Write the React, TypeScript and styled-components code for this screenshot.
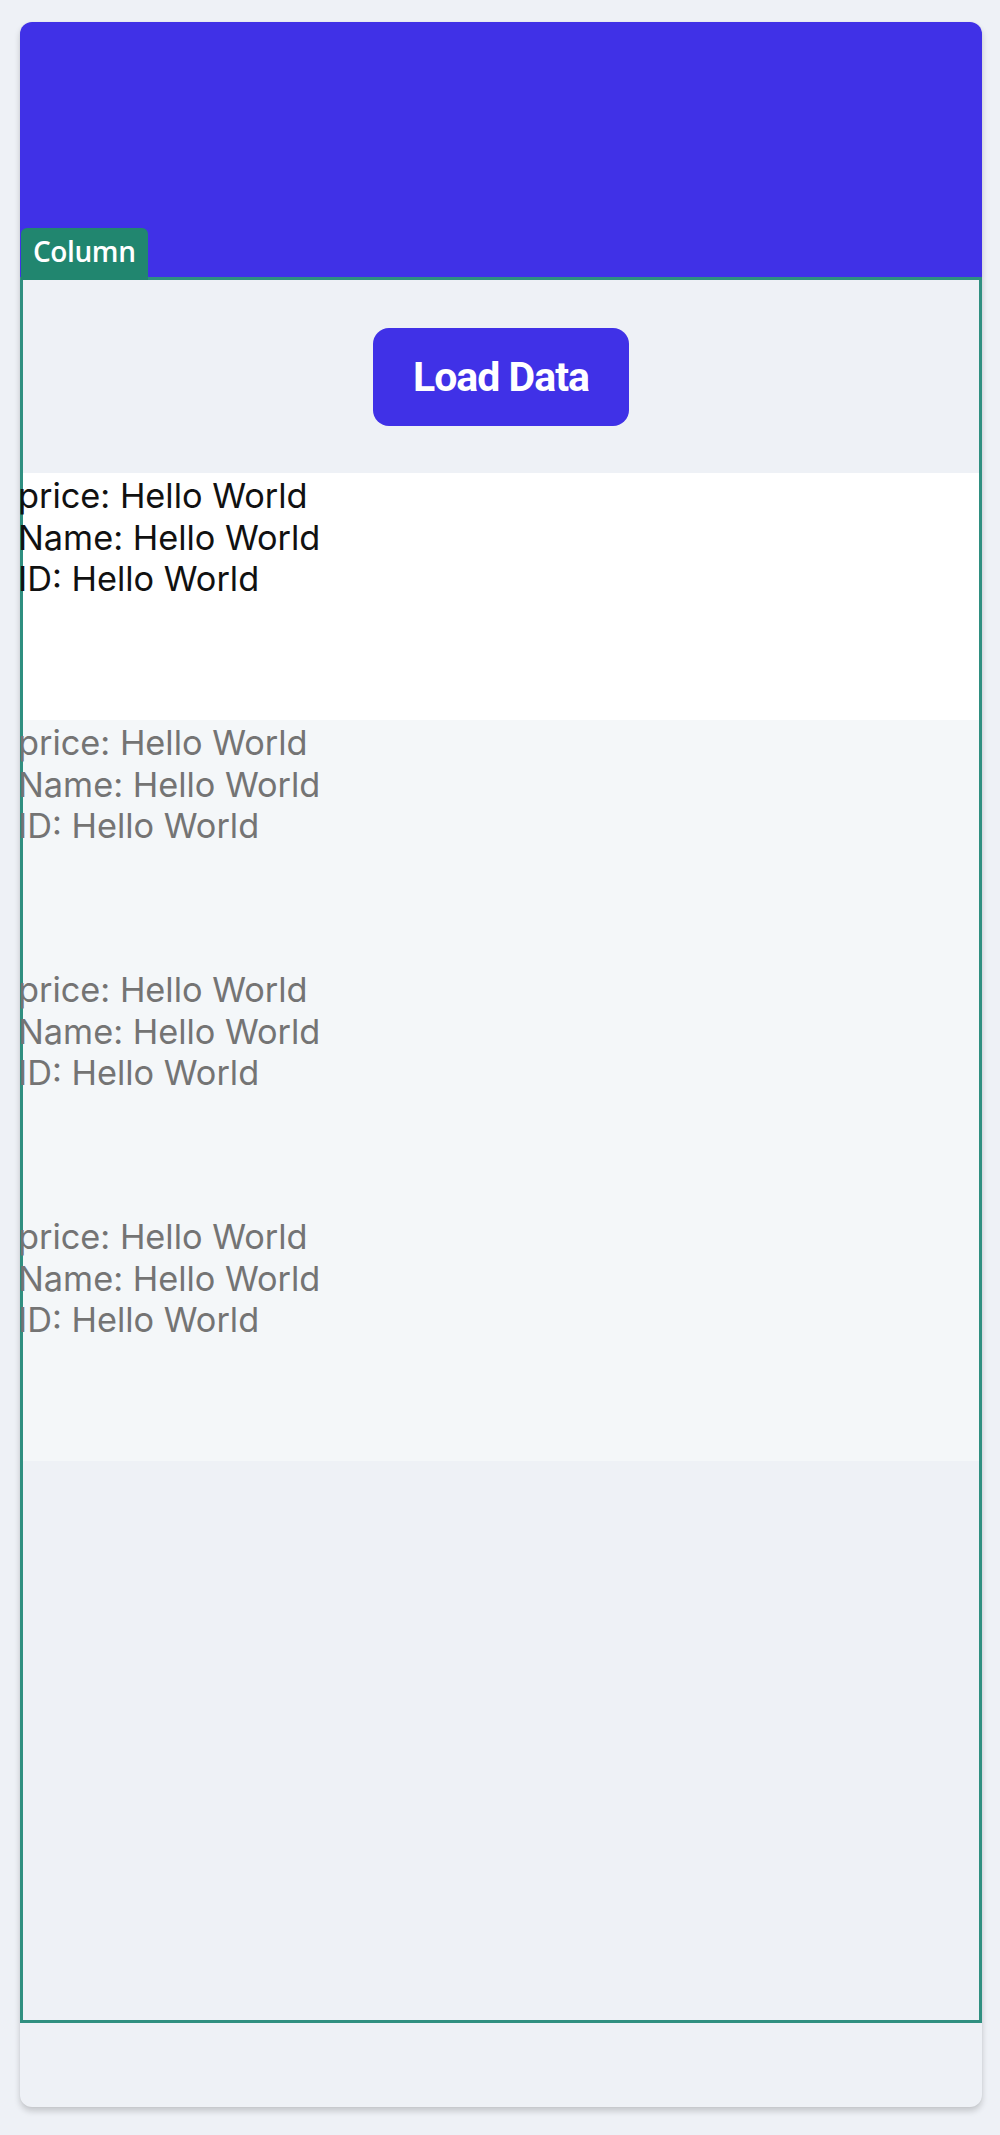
import React from "react";
import styled, { createGlobalStyle } from "styled-components";

const GlobalStyle = createGlobalStyle`
  html, body {
    margin: 0;
    padding: 0;
    background: #eef1f6;
  }
  body {
    font-family: "Inter", "Liberation Sans", sans-serif;
  }
`;

const Page = styled.div`
  padding: 22px 18px 28px 20px;
`;

const Card = styled.div`
  height: 2085px;
  display: flex;
  flex-direction: column;
  background: #eef1f6;
  border-radius: 12px;
  overflow: hidden;
  box-shadow: 0 4px 6px rgba(0, 0, 0, 0.18), 0 0 2px rgba(0, 0, 0, 0.06);
`;

const Header = styled.div`
  height: 255px;
  flex: none;
  background: #4031e7;
`;

const ColumnBox = styled.div`
  position: relative;
  height: 1746px;
  flex: none;
  box-sizing: border-box;
  border: 3px solid #2f8f80;
  display: flex;
  flex-direction: column;
  background: #eef1f6;
`;

const Tag = styled.div`
  position: absolute;
  left: -2px;
  bottom: 100%;
  height: 52px;
  box-sizing: border-box;
  padding: 0 12px 6px 12px;
  display: flex;
  align-items: center;
  background: #21866f;
  border-radius: 6px 6px 0 0;
  color: #ffffff;
  font-family: "Open Sans", "Lato", sans-serif;
  font-size: 28px;
  font-weight: 600;
  letter-spacing: -0.4px;
`;

const ButtonArea = styled.div`
  height: 193px;
  flex: none;
  display: flex;
  align-items: center;
  justify-content: center;
`;

const LoadButton = styled.button`
  height: 98px;
  padding: 0 40px;
  border: none;
  border-radius: 16px;
  background: #4031e7;
  color: #ffffff;
  font-family: "Roboto", "Inter", sans-serif;
  font-weight: 700;
  font-size: 41px;
  letter-spacing: -1px;
  cursor: pointer;
`;

const Row = styled.div<{ $active?: boolean }>`
  height: 247px;
  flex: none;
  box-sizing: border-box;
  padding-top: 2px;
  background: ${(p) => (p.$active ? "#ffffff" : "#f4f7f9")};
  color: ${(p) => (p.$active ? "#111111" : "#747474")};
`;

const Line = styled.div`
  margin-left: -5px;
  font-family: "Inter", "Liberation Sans", sans-serif;
  font-size: 34.3px;
  line-height: 41.5px;
  white-space: nowrap;
`;

const Filler = styled.div`
  flex: 1;
`;

const items = [
  { price: "Hello World", name: "Hello World", id: "Hello World" },
  { price: "Hello World", name: "Hello World", id: "Hello World" },
  { price: "Hello World", name: "Hello World", id: "Hello World" },
  { price: "Hello World", name: "Hello World", id: "Hello World" },
];

export default function App() {
  return (
    <>
      <GlobalStyle />
      <Page>
        <Card>
          <Header />
          <ColumnBox>
            <Tag>Column</Tag>
            <ButtonArea>
              <LoadButton>Load Data</LoadButton>
            </ButtonArea>
            {items.map((it, i) => (
              <Row key={i} $active={i === 0}>
                <Line>price: {it.price}</Line>
                <Line>Name: {it.name}</Line>
                <Line>ID: {it.id}</Line>
              </Row>
            ))}
            <Filler />
          </ColumnBox>
          <Filler />
        </Card>
      </Page>
    </>
  );
}
